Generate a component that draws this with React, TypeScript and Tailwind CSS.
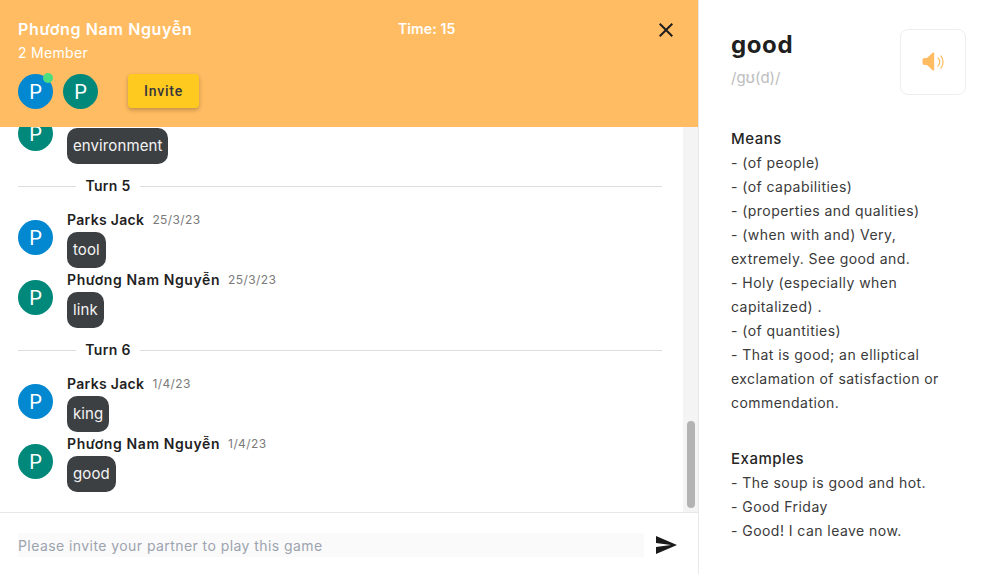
const font = "font-['Inter',sans-serif]";

function Avatar({ color, children }: { color: string; children?: React.ReactNode }) {
  return (
    <div className={`relative flex h-[35px] w-[35px] shrink-0 items-center justify-center rounded-full text-[20px] leading-none text-white font-['Roboto',sans-serif] ${color}`}>
      P
      {children}
    </div>
  );
}

function Turn({ label }: { label: string }) {
  return (
    <div className="my-2.5 flex h-6 shrink-0 items-center">
      <div className="h-px w-[58px] bg-[#dddddd]" />
      <div className="w-[64px] pb-px text-center text-[14px] font-semibold tracking-[0.3px] text-[#1f1f1f]">{label}</div>
      <div className="h-px flex-1 bg-[#dddddd]" />
    </div>
  );
}

function Bubble({ text }: { text: string }) {
  return (
    <div className="w-fit rounded-[10px] bg-[#3d4043] px-1.5 text-[15px] leading-9 tracking-[0.1px] text-[#f4f4f4]">{text}</div>
  );
}

function Message({ name, date, text, color }: { name: string; date: string; text: string; color: string }) {
  return (
    <div className="flex shrink-0 items-start gap-3.5">
      <div className="mt-3">
        <Avatar color={color} />
      </div>
      <div>
        <div className="flex h-6 items-center gap-2">
          <span className={name === me ? "pb-px text-[14px] font-semibold tracking-[0.6px] text-[#1f1f1f]" : "pb-px text-[14px] font-semibold tracking-[0.32px] text-[#1f1f1f]"}>{name}</span>
          <span className="pb-px text-[12px] tracking-[0.4px] text-[#7a7a7a]">{date}</span>
        </div>
        <Bubble text={text} />
      </div>
    </div>
  );
}

const me = "Phương Nam Nguyễn";
const blue = "bg-[#0288d1]";
const teal = "bg-[#00897b]";

export default function App() {
  return (
    <div className={`flex h-[574px] w-[993px] overflow-hidden bg-white ${font}`}>
      <main className="flex w-[699px] shrink-0 flex-col border-r border-[#e8e8e8]">
        <header className="flex h-[127px] shrink-0 bg-[#ffbc62] pl-[18px] pr-5 pt-[17px] text-white">
          <div className="w-[380px]">
            <div className="text-[16px] font-semibold leading-6 tracking-[0.65px]">{me}</div>
            <div className="text-[14px] leading-6 tracking-[0.3px]">2 Member</div>
            <div className="mt-[9px] flex items-start gap-2.5">
              <Avatar color={blue}>
                <span className="absolute right-0 top-[-1px] h-2.5 w-2.5 rounded-full bg-[#4ade80]" />
              </Avatar>
              <Avatar color={teal} />
              <button className="ml-5 h-[34px] w-[71px] rounded bg-[#ffca1f] text-[14px] font-medium tracking-[0.8px] text-[#37373f] shadow-[0_2px_4px_rgba(0,0,0,0.25)] font-['Roboto',sans-serif]">
                Invite
              </button>
            </div>
          </div>
          <div className="text-[14px] font-semibold leading-6 tracking-[0.1px]">Time: 15</div>
          <div className="ml-auto">
            <svg width="24" height="24" viewBox="0 0 24 24" className="mt-[1px] text-[#1f1f1f]" fill="currentColor">
              <path d="M19 6.41 17.59 5 12 10.59 6.41 5 5 6.41 10.59 12 5 17.59 6.41 19 12 13.41 17.59 19 19 17.59 13.41 12z" />
            </svg>
          </div>
        </header>

        <div className="flex min-h-0 flex-1">
          <div className="flex min-w-0 flex-1 flex-col justify-end overflow-hidden pb-5 pl-[18px] pr-[21px]">
            <Message name={me} date="25/3/23" text="environment" color={teal} />
            <Turn label="Turn 5" />
            <Message name="Parks Jack" date="25/3/23" text="tool" color={blue} />
            <Message name={me} date="25/3/23" text="link" color={teal} />
            <Turn label="Turn 6" />
            <Message name="Parks Jack" date="1/4/23" text="king" color={blue} />
            <Message name={me} date="1/4/23" text="good" color={teal} />
          </div>
          <div className="flex w-[15px] shrink-0 flex-col justify-end bg-[#f4f4f4] pb-[4px]">
            <div className="mx-auto h-[87px] w-2 rounded-full bg-[#b3b3b3]" />
          </div>
        </div>

        <div className="flex h-[62px] shrink-0 items-start border-t border-[#e5e7eb] pl-[18px] pr-5 pt-5">
          <input
            className="h-6 w-[626px] bg-[#fafafa] pt-px text-[14px] tracking-[0.43px] outline-none placeholder:text-[#9ca3af]"
            placeholder="Please invite your partner to play this game"
          />
          <svg width="24" height="24" viewBox="0 0 24 24" className="ml-2.5 text-[#1a1a1a]" fill="currentColor">
            <path d="M2.01 21 23 12 2.01 3 2 10l15 2-15 2z" />
          </svg>
        </div>
      </main>

      <aside className="flex-1 pl-8 pr-[27px] pt-[29px] text-[14px] leading-6 tracking-[0.45px] text-[#3a3a3a]">
        <div className="flex h-[66px] justify-between">
          <div>
            <div className="text-[24px] font-bold leading-8 tracking-[0.6px] text-[#1f1f1f]">good</div>
            <div className="mt-[5px] text-[15px] tracking-normal text-[#bdbdbd]">/gʊ(d)/</div>
          </div>
          <button className="flex h-[66px] w-[66px] items-center justify-center rounded-lg border border-[#eeeeee]">
            <svg width="24" height="24" viewBox="0 0 24 24" fill="none">
              <path d="M3.500 8H6l5.500-5.200c.7-.6 1.700-.2 1.700.7v16c0 .9-1 1.300-1.700.7L6 15H3.500a2 2 0 0 1-2-2v-3a2 2 0 0 1 2-2z" fill="#ffbc62" />
              <path d="M17 8a5.500 5.500 0 0 1 0 8M20 6a9.500 9.500 0 0 1 0 12" stroke="#ffbc62" strokeWidth="1.200" strokeLinecap="round" />
            </svg>
          </button>
        </div>
        <h3 className="mt-[32px] text-[15px] font-medium tracking-[0.5px] text-[#262626]">Means</h3>
        <p>- (of people)</p>
        <p>- (of capabilities)</p>
        <p>- (properties and qualities)</p>
        <p>- (when with and) Very, extremely. See good and.</p>
        <p>- Holy (especially when capitalized) .</p>
        <p>- (of quantities)</p>
        <p>- That is good; an elliptical exclamation of satisfaction or commendation.</p>
        <h3 className="mt-8 text-[15px] font-medium tracking-[0.5px] text-[#262626]">Examples</h3>
        <p>- The soup is good and hot.</p>
        <p>- Good Friday</p>
        <p>- Good! I can leave now.</p>
      </aside>
    </div>
  );
}
